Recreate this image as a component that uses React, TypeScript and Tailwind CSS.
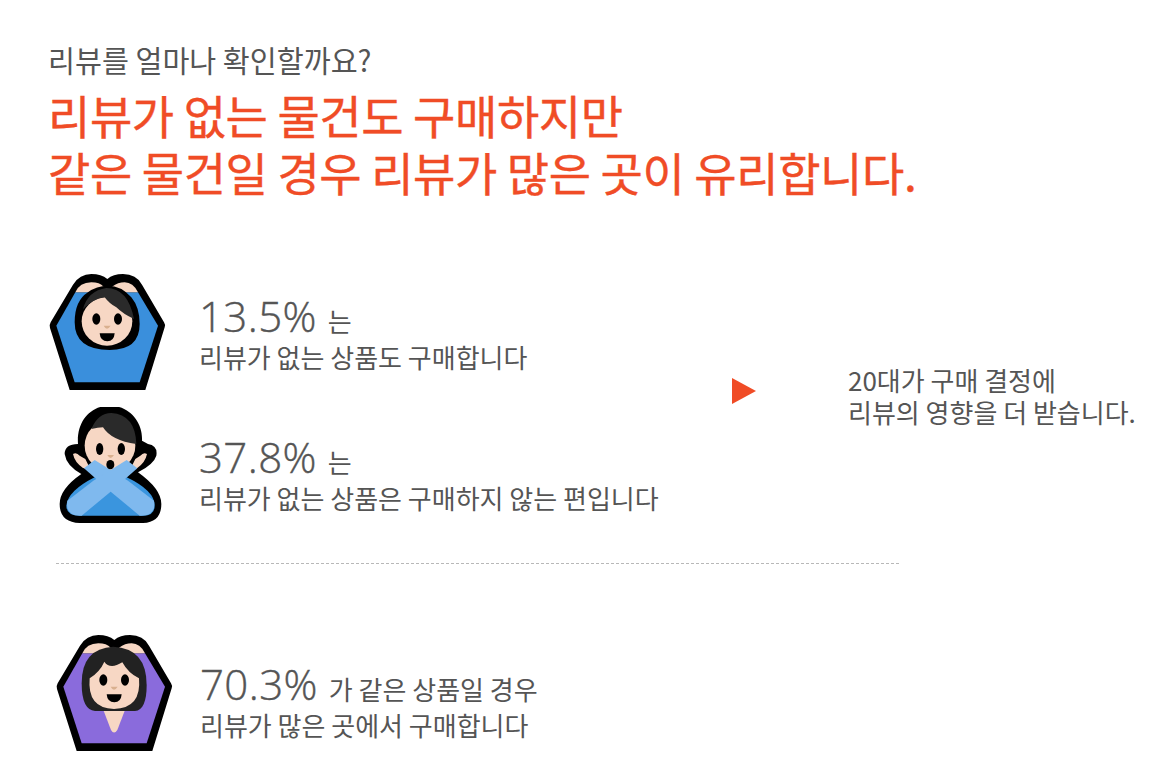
import React from "react";

const OUTER =
  "M95 378 L322 378 L380 190 Q383 182 378 175 L312 62 Q295 30 255 30 Q225 30 208 45 Q190 30 160 30 Q125 30 105 62 L38 175 Q33 183 36 192 Z";
const BODY = "M112 85 L300 85 L360 185 L305 355 L110 355 L55 185 Z";
const SKIN = "#f7d7c4";

function Hands() {
  return (
    <>
      <path d="M112 85 Q125 55 160 55 Q185 55 197 68 L185 85 Z" fill={SKIN} />
      <path d="M222 68 Q240 55 260 55 Q285 55 300 85 L235 85 Z" fill={SKIN} />
    </>
  );
}

function Face() {
  return (
    <>
      <ellipse cx="175" cy="165" rx="12" ry="17" fill="#000" />
      <ellipse cx="240" cy="165" rx="12" ry="17" fill="#000" />
      <path d="M197 185 L218 185 Q212 194 207 194 Q202 194 197 185 Z" fill="#d9b08f" />
      <path d="M185 208 L230 208 Q228 232 208 232 Q187 232 185 208 Z" fill="#000" />
    </>
  );
}

function BoyUp() {
  return (
    <svg width="120" height="120" viewBox="30 30 360 360" className="shrink-0">
      <path d={OUTER} fill="#000" />
      <path d={BODY} fill="#3a8fdc" />
      <Hands />
      <path d="M110 175 Q110 110 150 85 Q175 65 210 65 Q250 65 280 100 Q305 130 305 180 Q305 258 215 258 Q110 258 110 175 Z" fill="#000" />
      <ellipse cx="207" cy="172" rx="76" ry="73" fill={SKIN} />
      <path d="M135 135 Q150 80 205 72 Q270 72 288 165 Q255 150 235 130 Q215 120 200 100 Q165 105 135 135 Z" fill="#2a2a2a" />
      <Face />
    </svg>
  );
}

function GirlUp() {
  return (
    <svg width="120" height="120" viewBox="30 27 360 360" className="shrink-0">
      <path d={OUTER} fill="#000" />
      <path d={BODY} fill="#8a6bdc" />
      <Hands />
      <path d="M175 255 L240 255 L217 315 Q207 330 198 315 Z" fill={SKIN} />
      <path d="M110 175 Q110 70 205 65 Q305 70 305 180 Q305 255 270 258 L150 258 Q110 255 110 175 Z" fill="#222" />
      <path d="M134 160 Q165 140 178 110 Q195 135 232 112 Q250 145 282 160 Q290 250 207 252 Q126 250 134 160 Z" fill={SKIN} />
      <Face />
    </svg>
  );
}

function BoyCross() {
  return (
    <svg width="120" height="120" viewBox="0 24 360 360" className="shrink-0">
      <path
        d="M185 20 C245 20 285 70 282 125 L300 135 Q330 140 325 170 Q318 195 270 220 Q340 270 340 315 Q340 370 285 372 L95 372 Q35 370 35 315 Q35 270 100 225 Q55 200 50 165 Q50 135 90 135 C85 70 125 20 185 20 Z"
        fill="#000"
      />
      <circle cx="186" cy="140" r="76" fill={SKIN} />
      <path d="M130 90 Q150 42 190 42 Q262 47 265 135 Q190 125 165 85 Q150 85 130 90 Z" fill="#2a2a2a" />
      <path d="M75 165 Q85 158 95 170 L112 180 L128 212 L105 207 Q80 190 75 165 Z" fill={SKIN} />
      <path d="M297 165 Q287 158 277 170 L262 180 L246 212 L268 207 Q292 190 297 165 Z" fill={SKIN} />
      <path d="M55 320 Q60 275 140 235 L236 235 Q320 275 320 320 Q320 350 285 350 L95 350 Q55 350 55 320 Z" fill="#3a95de" />
      <path d="M108 208 L140 183 L240 245 L318 305 Q325 350 280 350 L275 350 L190 280 Z" fill="#7fb9ee" />
      <path d="M268 208 L236 183 L136 245 L58 305 Q51 350 96 350 L101 350 L186 280 Z" fill="#7fb9ee" />
      <ellipse cx="155" cy="150" rx="11" ry="18" fill="#000" />
      <ellipse cx="220" cy="150" rx="11" ry="18" fill="#000" />
      <path d="M178 168 L198 168 Q192 177 188 177 Q183 177 178 168 Z" fill="#d9b08f" />
      <ellipse cx="187" cy="197" rx="12" ry="14" fill="#000" />
    </svg>
  );
}

function Row({ icon, num, tail, sub, low, gap }: { icon: React.ReactNode; num: string; tail: string; sub: string; low?: boolean; gap?: boolean }) {
  return (
    <div className="flex items-center">
      {icon}
      <div className={`text-[#555555] ${gap ? "ml-[25px]" : "ml-[31px]"} ${low ? "pt-[16px]" : ""}`}>
        <div className="flex items-baseline h-[46px]">
          <span className="text-[42px] leading-[46px] font-light tracking-[0.4px] [-webkit-text-stroke:0.4px_#555555]" style={{ fontFamily: '"Open Sans", sans-serif' }}>{num}</span>
          <span className="ml-[11px] text-[26px] leading-[46px]">{tail}</span>
        </div>
        <div className="text-[26px] leading-[36px] whitespace-nowrap">{sub}</div>
      </div>
    </div>
  );
}

export default function App() {
  return (
    <div
      className="w-[1161px] h-[775px] overflow-hidden bg-white pt-[38px] pl-[48px]"
      style={{ fontFamily: '"Noto Sans CJK KR", "Noto Sans", sans-serif' }}
    >
      <div className="text-[29.3px] leading-[42px] text-[#555555]">리뷰를 얼마나 확인할까요?</div>
      <h1 className="mt-[6px] text-[46px] leading-[57px] tracking-[-0.4px] font-normal text-[#f04c26] [-webkit-text-stroke:0.4px_#f04c26]">
        리뷰가 없는 물건도 구매하지만
        <br />
        같은 물건일 경우 리뷰가 많은 곳이 유리합니다.
      </h1>
      <div className="mt-[74px] flex items-center">
        <div className="w-[684px] flex flex-col gap-[13px]">
          <Row icon={<BoyUp />} num="13.5%" tail="는" sub="리뷰가 없는 상품도 구매합니다" />
          <Row icon={<BoyCross />} low num="37.8%" tail="는" sub="리뷰가 없는 상품은 구매하지 않는 편입니다" />
        </div>
        <div className="mb-[20px] w-0 h-0 border-y-[13px] border-y-transparent border-l-[24px] border-l-[#f04c26]" />
        <div className="mb-[9px] ml-[92px] text-[26px] leading-[32px] text-[#555555] whitespace-nowrap">
          20대가 구매 결정에
          <br />
          리뷰의 영향을 더 받습니다.
        </div>
      </div>
      <div className="ml-[8px] mt-[36px] w-[843px] border-t border-dashed border-[#b8b8b8]" />
      <div className="mt-[70px] ml-[7px]">
        <Row icon={<GirlUp />} low gap num="70.3%" tail="가 같은 상품일 경우" sub="리뷰가 많은 곳에서 구매합니다" />
      </div>
    </div>
  );
}
